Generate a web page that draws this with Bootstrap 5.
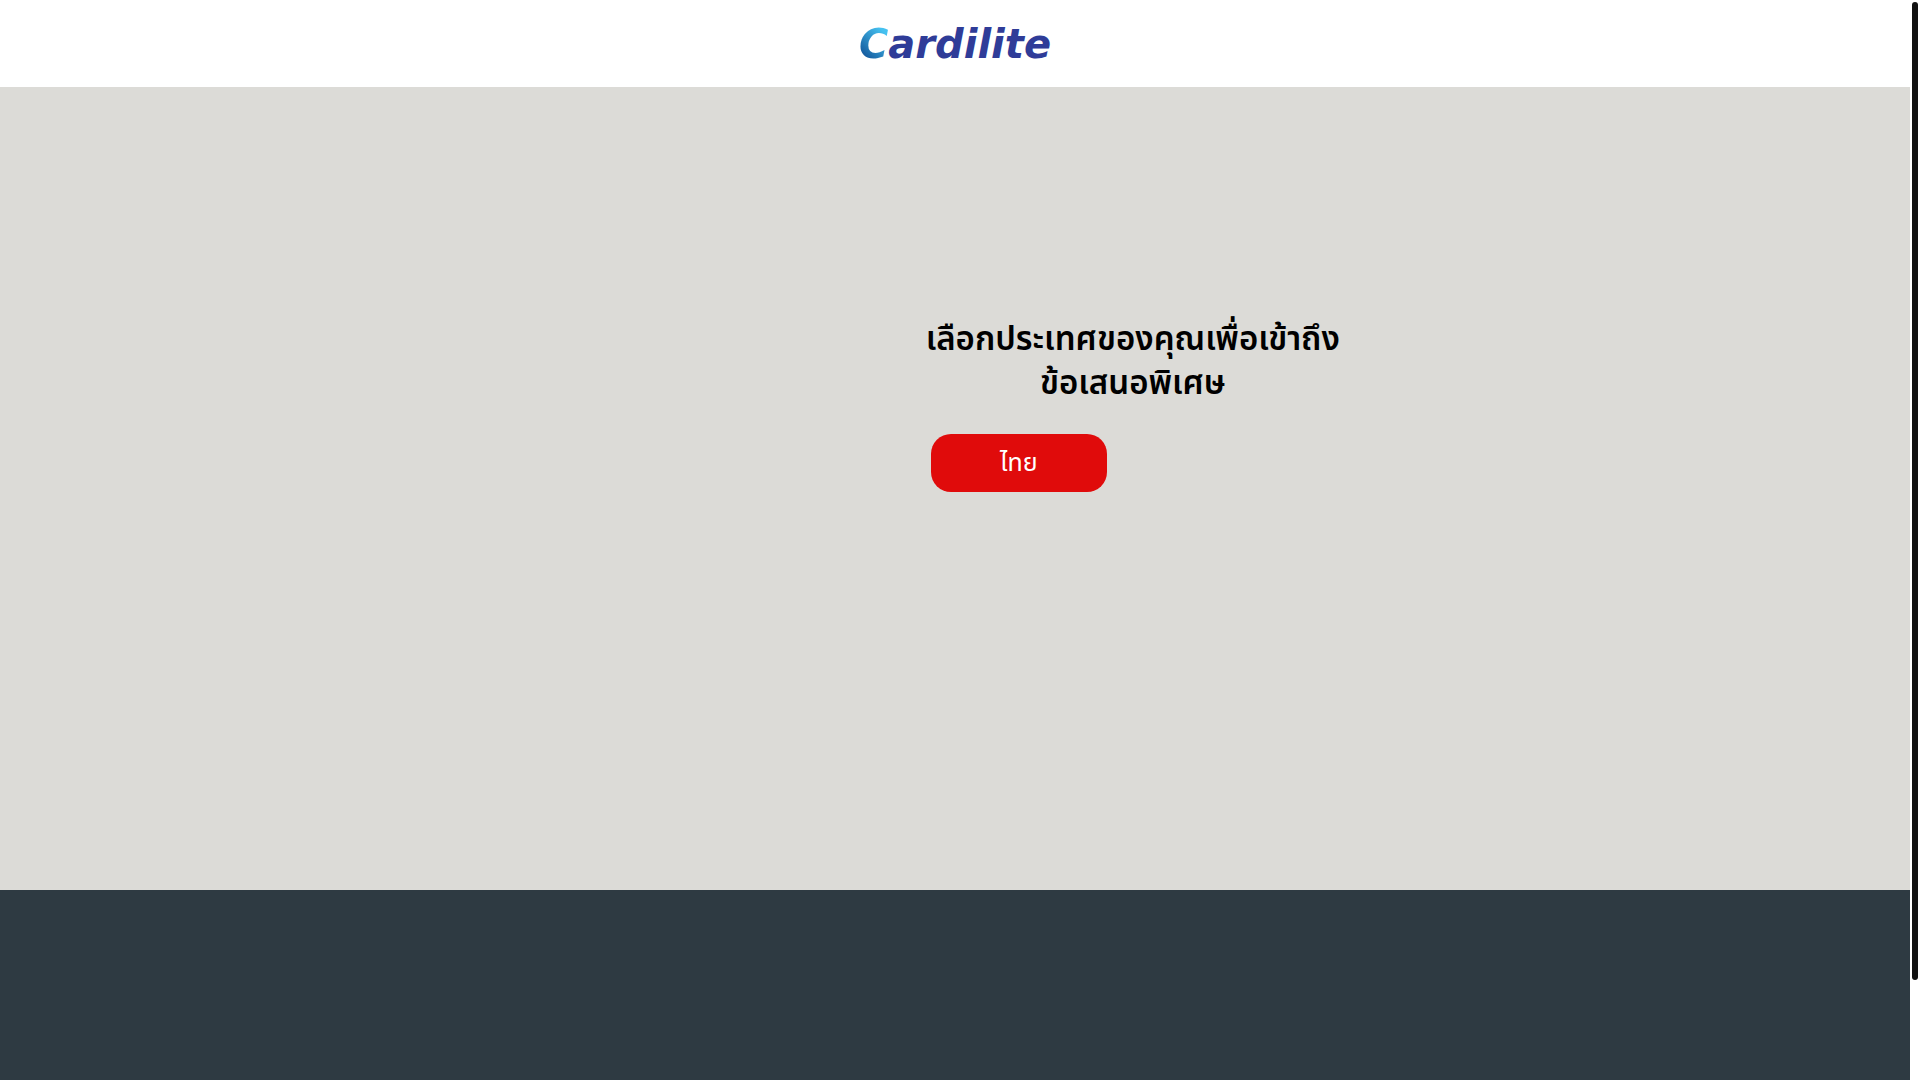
<!DOCTYPE html>
<html lang="th">
<head>
<meta charset="utf-8">
<meta name="viewport" content="width=device-width, initial-scale=1">
<title>Cardilite</title>
<link href="https://cdn.jsdelivr.net/npm/bootstrap@5.3.0/dist/css/bootstrap.min.css" rel="stylesheet">
<style>
  html { overflow: hidden; }
  body { font-family: "Noto Sans Thai", "Noto Sans", sans-serif; color: #000; padding-right: 10px; }
  .site-header { height: 87px; }
  .wordmark { font: italic bold 40px/48px "DejaVu Sans", sans-serif; color: #2f3c98; }
  .wordmark:hover { color: #2f3c98; }
  .wordmark-initial { background: linear-gradient(45deg, #14589c 20%, #45c1f0 80%); -webkit-background-clip: text; background-clip: text; color: transparent; }
  .country-area { background: #dcdbd7; flex: 0 0 803px; padding-top: 231px; }
  .country-panel { width: 432px; margin-left: 48%; }
  .country-title { font-size: 33px; line-height: 44px; font-weight: 600; margin-bottom: 28px; }
  .country-btn { width: 176px; height: 58px; border-radius: 20px; background: #e00b0b; color: #fff; font-size: 25px; line-height: 32px; font-weight: 400; margin-left: 14px; }
  .country-btn:hover { background: #c40909; color: #fff; }
  .site-footer { background: #2e3a42; }
  .scroll-thumb { top: 2px; right: 2px; width: 6px; height: 90.6vh; background: #111; }
</style>
</head>
<body>
<div class="d-flex flex-column vh-100 overflow-hidden">
  <header class="site-header bg-white d-flex flex-shrink-0 align-items-center justify-content-center">
    <a class="wordmark text-decoration-none" href="#"><span class="wordmark-initial">C</span>ardilite</a>
  </header>
  <main class="country-area">
    <section class="country-panel">
      <h1 class="country-title text-center">เลือกประเทศของคุณเพื่อเข้าถึง<br>ข้อเสนอพิเศษ</h1>
      <button type="button" class="country-btn btn border-0">ไทย</button>
    </section>
  </main>
  <footer class="site-footer flex-grow-1"></footer>
</div>
<div class="scroll-thumb position-fixed rounded-pill"></div>
<script src="https://cdn.jsdelivr.net/npm/bootstrap@5.3.0/dist/js/bootstrap.bundle.min.js"></script>
</body>
</html>
